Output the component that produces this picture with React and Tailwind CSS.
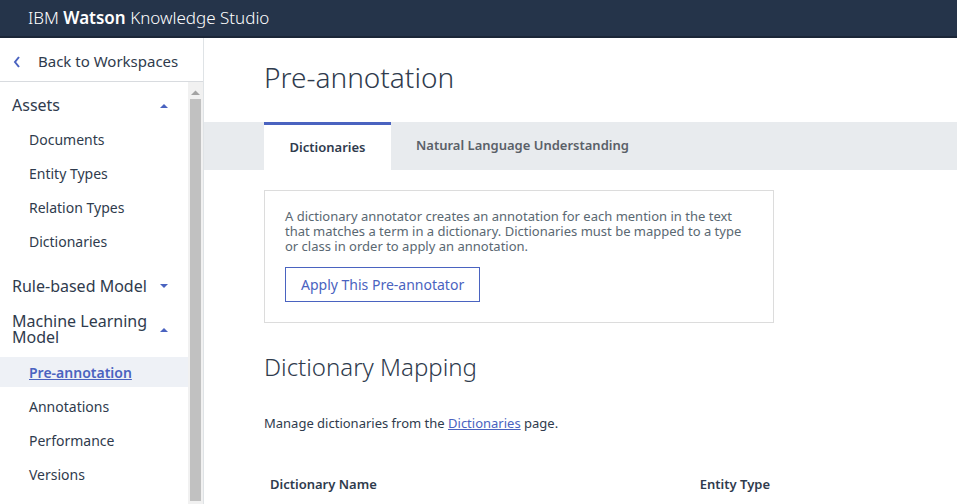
import React from 'react';

const assets = ['Documents', 'Entity Types', 'Relation Types', 'Dictionaries'];
const mlItems = ['Pre-annotation', 'Annotations', 'Performance', 'Versions'];

function Caret({ up }) {
  return (
    <svg width="8" height="5" viewBox="0 0 8 5" className="text-[#4a63c0]">
      {up ? <path d="M0 5 L4 1 L8 5 Z" fill="currentColor" /> : <path d="M0 0 L8 0 L4 4 Z" fill="currentColor" />}
    </svg>
  );
}

function Sidebar() {
  return (
    <aside className="w-[204px] shrink-0 border-r border-[#dfe3e6] flex flex-col h-[466px] overflow-hidden">
      <div className="h-[44px] pt-[4px] flex items-center pl-[12px] border-b border-[#d8dbdf] text-[15px] text-[#2f3b4d] shrink-0">
        <svg width="10" height="14" viewBox="0 0 10 14" className="mr-[16px]">
          <path d="M7 2 L3 7 L7 12" stroke="#4a63c0" strokeWidth="2" fill="none" />
        </svg>
        Back to Workspaces
      </div>
      <div className="flex flex-1 min-h-0">
        <nav className="flex-1 pt-[14px]">
          <div className="flex items-center justify-between pl-[12px] pr-[20px] h-[18px] text-[16px] text-[#2f3b4d]">
            Assets <Caret up />
          </div>
          <div className="mt-[8px]">
            {assets.map(a => (
              <div key={a} className="h-[34px] flex items-center pl-[29px] text-[14px] text-[#2f3b4d]">{a}</div>
            ))}
          </div>
          <div className="mt-[19px] flex items-center justify-between pl-[12px] pr-[20px] h-[18px] text-[16px] text-[#2f3b4d]">
            Rule-based Model <Caret />
          </div>
          <div className="mt-[18px] flex items-center justify-between pl-[12px] pr-[20px] text-[16px] leading-[16px] text-[#2f3b4d]">
            <span>Machine Learning<br />Model</span> <Caret up />
          </div>
          <div className="mt-[12px]">
            {mlItems.map((m, i) => (
              <div
                key={m}
                className={
                  i === 0
                    ? 'h-[30px] mb-[2px] flex items-center pl-[29px] text-[14px] bg-[#eef1f6] text-[#4a63c0] font-semibold underline'
                    : 'h-[34px] flex items-center pl-[29px] text-[14px] text-[#2f3b4d]'
                }
              >
                {m}
              </div>
            ))}
          </div>
        </nav>
        <div className="w-[15px] bg-[#f1f1f1] flex flex-col items-center shrink-0">
          <svg width="9" height="6" viewBox="0 0 9 6" className="mt-[8px]">
            <path d="M0 5 L4.5 0.5 L9 5 Z" fill="#a3a3a3" />
          </svg>
          <div className="mt-[3px] w-[11px] flex-1 mb-[3px] bg-[#c1c1c1]" />
        </div>
      </div>
    </aside>
  );
}

export default function App() {
  return (
    <div className="w-[957px] h-[504px] overflow-hidden bg-white font-['Noto_Sans',sans-serif]">
      <header className="h-[38px] bg-[#25344a] border-b-2 border-[#1b2637] flex items-center pl-[28px] text-[17px] text-white">
        <span className="font-light">IBM&nbsp;</span>
        <span className="font-semibold">Watson</span>
        <span className="font-light">&nbsp;Knowledge Studio</span>
      </header>
      <div className="flex">
        <Sidebar />
        <main className="flex-1 min-w-0">
          <h1 className="pl-[60px] pt-[18px] h-[84px] text-[28px] font-light text-[#2f3b4d]">Pre-annotation</h1>
          <div className="h-[48px] bg-[#e8ebee] flex pl-[60px]">
            <div className="w-[127px] bg-white border-t-[3px] border-[#4a63c0] flex items-center justify-center text-[13px] font-semibold text-[#2f3b4d]">
              Dictionaries
            </div>
            <div className="px-[25px] flex items-center text-[13px] font-semibold text-[#5a6068]">
              Natural Language Understanding
            </div>
          </div>
          <div className="ml-[60px] mt-[20px] w-[510px] border border-[#dcdcdc] px-[20px] pt-[18px] pb-[20px]">
            <p className="text-[13px] leading-[15px] text-[#5a6872]">
              A dictionary annotator creates an annotation for each mention in the text that matches a term in a dictionary. Dictionaries must be mapped to a type or class in order to apply an annotation.
            </p>
            <button className="mt-[13px] h-[35px] px-[15px] border border-[#4a63c0] text-[14px] text-[#4a63c0]">
              Apply This Pre-annotator
            </button>
          </div>
          <h2 className="pl-[60px] mt-[26px] text-[24px] font-light text-[#2f3b4d]">Dictionary Mapping</h2>
          <p className="pl-[60px] mt-[29px] text-[13px] text-[#2f3b4d]">
            Manage dictionaries from the <a className="text-[#4a63c0] underline">Dictionaries</a> page.
          </p>
          <div className="ml-[66px] mt-[41px] w-[500px] flex justify-between text-[13px] font-semibold text-[#2f3b4d]">
            <span>Dictionary Name</span>
            <span>Entity Type</span>
          </div>
        </main>
      </div>
    </div>
  );
}
